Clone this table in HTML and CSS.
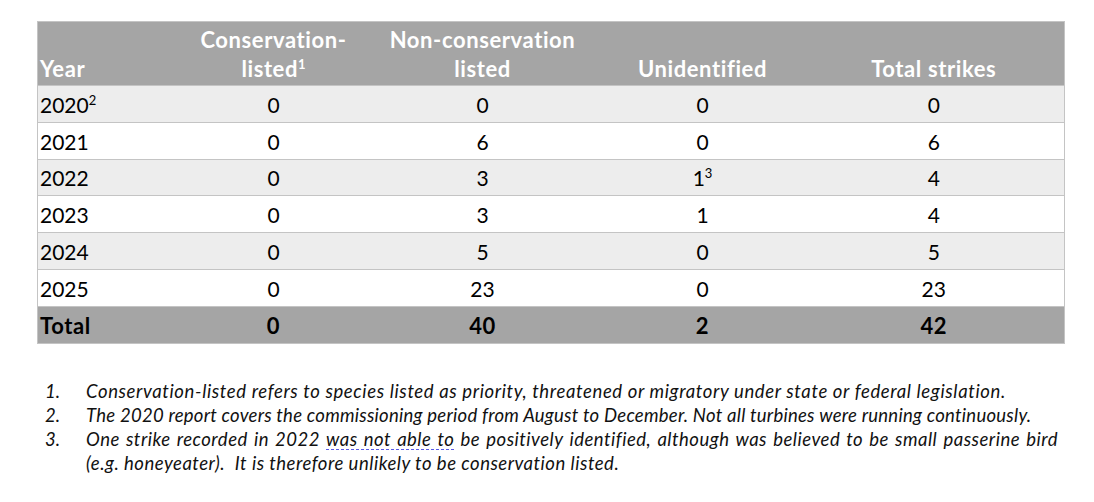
FILE: index.html
```html
<!DOCTYPE html>
<html lang="en">
<head>
<meta charset="utf-8">
<title>Bird strikes</title>
<link rel="stylesheet" href="styles.css">
</head>
<body>
<div class="page">
  <table class="strikes">
    <colgroup>
      <col class="c-year">
      <col class="c-cons">
      <col class="c-non">
      <col class="c-unid">
      <col class="c-total">
    </colgroup>
    <thead>
      <tr>
        <th class="year">Year</th>
        <th>Conservation-<br>listed<sup>1</sup></th>
        <th>Non-conservation<br>listed</th>
        <th>Unidentified</th>
        <th>Total strikes</th>
      </tr>
    </thead>
    <tbody>
      <tr class="shade"><td class="year">2020<sup class="thin">2</sup></td><td>0</td><td>0</td><td>0</td><td>0</td></tr>
      <tr><td class="year">2021</td><td>0</td><td>6</td><td>0</td><td>6</td></tr>
      <tr class="shade"><td class="year">2022</td><td>0</td><td>3</td><td>1<sup class="thin">3</sup></td><td>4</td></tr>
      <tr><td class="year">2023</td><td>0</td><td>3</td><td>1</td><td>4</td></tr>
      <tr class="shade"><td class="year">2024</td><td>0</td><td>5</td><td>0</td><td>5</td></tr>
      <tr><td class="year">2025</td><td>0</td><td>23</td><td>0</td><td>23</td></tr>
      <tr class="total"><td class="year">Total</td><td>0</td><td>40</td><td>2</td><td>42</td></tr>
    </tbody>
  </table>

  <ol class="notes">
    <li><span class="num">1.</span><span class="txt one">Conservation-listed refers to species listed as priority, threatened or migratory under state or federal legislation.</span></li>
    <li><span class="num">2.</span><span class="txt two">The 2020 report covers the commissioning period from August to December. Not all turbines were running continuously.</span></li>
    <li><span class="num">3.</span><span class="txt"><span class="just">One strike recorded in 2022 <span class="flag">was not able to</span> be positively identified, although was believed to be small passerine bird</span><span class="line">(e.g. honeyeater).&nbsp; It is therefore unlikely to be conservation listed.</span></span></li>
  </ol>
</div>
</body>
</html>
```

FILE: styles.css
```css
html, body {
  margin: 0;
  padding: 0;
  background: #ffffff;
}

.page {
  padding: 21px 0 0 37px;
  font-family: "Lato", "Open Sans", sans-serif;
  color: #000;
}

.strikes {
  border-collapse: collapse;
  width: 1027px;
  table-layout: fixed;
  font-size: 21px;
  border: 1px solid #c4c4c4;
}

.c-year { width: 146px; }
.c-cons { width: 180px; }
.c-non { width: 238px; }
.c-unid { width: 202px; }
.c-total { width: 261px; }

.strikes th {
  background: #a5a5a5;
  color: #ffffff;
  font-weight: 700;
  font-size: 22px;
  letter-spacing: 0.6px;
  line-height: 29px;
  height: 58px;
  padding: 3px 0 2px;
  vertical-align: bottom;
  text-align: center;
}

.strikes td {
  height: 30.8px;
  padding: 0 0 5px;
  line-height: 25px;
  vertical-align: bottom;
  text-align: center;
  border-top: 1px solid #c4c4c4;
}

.strikes .year {
  text-align: left;
  padding-left: 2px;
}

.strikes tr.shade td {
  background: #ededed;
}

.strikes tr.total td {
  background: #a5a5a5;
  font-weight: 700;
  font-size: 22px;
  letter-spacing: 0.6px;
  border-top: 1px solid #c4c4c4;
}

.strikes sup {
  font-size: 13px;
  line-height: 0;
  letter-spacing: 0;
  vertical-align: 8px;
}

.strikes sup.thin {
  font-weight: 400;
}

.notes {
  list-style: none;
  margin: 35px 0 0;
  padding: 0;
  font-style: italic;
  font-size: 18.5px;
  letter-spacing: 0.5px;
  line-height: 24.3px;
  color: #111;
}

.notes li {
  display: flex;
}

.notes .num {
  flex: 0 0 auto;
  width: 41px;
  padding-left: 8px;
  letter-spacing: 0;
}

.notes .txt {
  flex: 0 0 972px;
  width: 972px;
}

.notes .one {
  white-space: nowrap;
  letter-spacing: 0.63px;
}

.notes .two {
  white-space: nowrap;
  letter-spacing: 0.25px;
}

.notes .just {
  display: block;
  text-align: justify;
  text-align-last: justify;
}

.notes .line {
  display: block;
}

.flag {
  text-decoration: underline dashed #5a5ae6;
  text-decoration-thickness: 1px;
  text-underline-offset: 3px;
}
```
